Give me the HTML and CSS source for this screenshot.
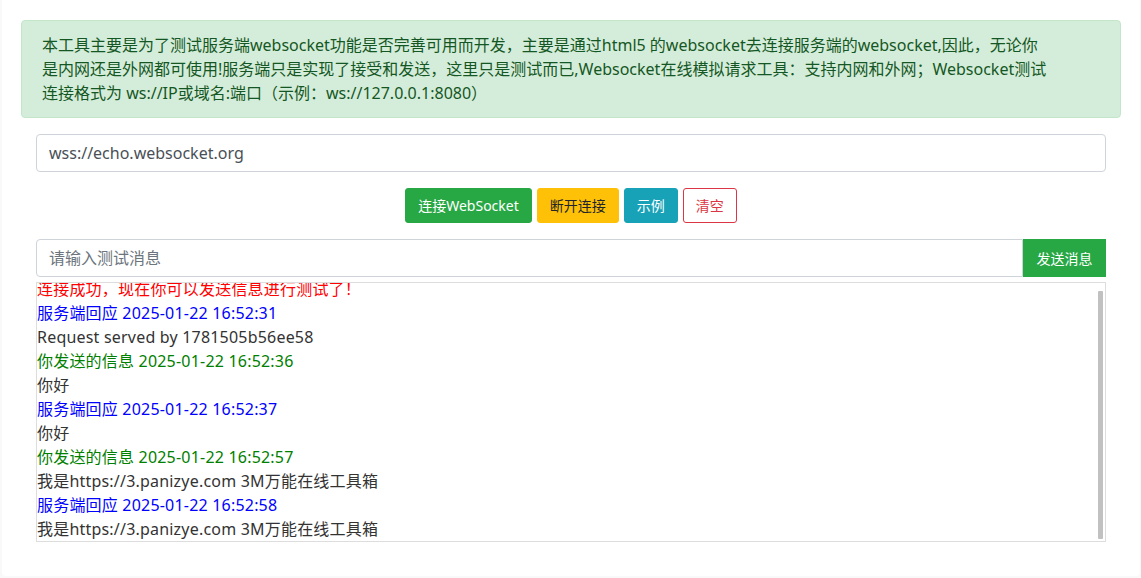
FILE: index.html
```html
<!DOCTYPE html>
<html lang="zh-CN">
<head>
    <meta charset="UTF-8">
    <meta name="viewport" content="width=device-width, initial-scale=1.0">
    <title>WebSocket在线测试</title>
    <link rel="stylesheet" href="styles.css">
</head>
<body>
    <div class="page">
        <div class="container">
            <div class="alert">
                本工具主要是为了测试服务端websocket功能是否完善可用而开发，主要是通过html5 的websocket去连接服务端的websocket,因此，无论你是内网还是外网都可使用!服务端只是实现了接受和发送，这里只是测试而已,Websocket在线模拟请求工具：支持内网和外网；Websocket测试连接格式为 ws://IP或域名:端口（示例：ws://127.0.0.1:8080）
            </div>

            <div class="tool">
                <input type="text" id="url" class="form-control" value="wss://echo.websocket.org">

                <div class="btn-row">
                    <button class="btn btn-success">连接WebSocket</button>
                    <button class="btn btn-warning">断开连接</button>
                    <button class="btn btn-info">示例</button>
                    <button class="btn btn-outline-danger">清空</button>
                </div>

                <div class="input-group">
                    <input type="text" id="message" class="form-control" placeholder="请输入测试消息">
                    <button class="btn btn-success btn-send">发送消息</button>
                </div>

                <div class="log-wrap">
                    <div class="log" id="log">
                        <div class="msg-ok">连接成功，现在你可以发送信息进行测试了！</div>
                        <div class="msg-server">服务端回应 2025-01-22 16:52:31</div>
                        <div>Request served by 1781505b56ee58</div>
                        <div class="msg-client">你发送的信息 2025-01-22 16:52:36</div>
                        <div>你好</div>
                        <div class="msg-server">服务端回应 2025-01-22 16:52:37</div>
                        <div>你好</div>
                        <div class="msg-client">你发送的信息 2025-01-22 16:52:57</div>
                        <div>我是https://3.panizye.com 3M万能在线工具箱</div>
                        <div class="msg-server">服务端回应 2025-01-22 16:52:58</div>
                        <div>我是https://3.panizye.com 3M万能在线工具箱</div>
                    </div>
                    <div class="scroll-thumb"></div>
                </div>
            </div>
        </div>
    </div>

    <script>
        // keep the log scrolled to the newest message
        var log = document.getElementById('log');
        log.scrollTop = log.scrollHeight;
    </script>
</body>
</html>
```

FILE: styles.css
```css
body {
    margin: 0;
    background-color: #f9f9f9;
    font-family: "Noto Sans", "Noto Sans CJK SC", sans-serif;
    font-size: 16px;
    line-height: 1.5;
    color: #333;
}
.page {
    background-color: #fff;
    margin: 0 1px 0 2px;
    min-height: 576px;
    border-radius: 0 0 4px 4px;
}
.container {
    max-width: 1100px;
    margin: 0 auto;
    padding-top: 20px;
}
.alert {
    background-color: #d4edda;
    border: 1px solid #c3e6cb;
    color: #155724;
    border-radius: 4px;
    padding: 12px 68px 12px 20px;
}
.tool {
    padding: 16px 15px 0;
}
.form-control {
    display: block;
    width: 100%;
    height: 38px;
    padding: 6px 12px;
    font-family: inherit;
    font-size: 16px;
    color: #495057;
    border: 1px solid #ced4da;
    border-radius: 4px;
    box-sizing: border-box;
}
.form-control::placeholder {
    color: #6c757d;
}
.btn-row {
    display: flex;
    justify-content: center;
    gap: 5px;
    margin: 16px 0;
}
.btn {
    font-family: inherit;
    font-size: 14px;
    line-height: 21px;
    padding: 6px 12px;
    border: 1px solid transparent;
    border-radius: 3px;
    cursor: pointer;
}
.btn-success {
    background-color: #28a745;
    border-color: #28a745;
    color: #fff;
}
.btn-warning {
    background-color: #ffc107;
    border-color: #ffc107;
    color: #212529;
}
.btn-info {
    background-color: #17a2b8;
    border-color: #17a2b8;
    color: #fff;
}
.btn-outline-danger {
    background-color: #fff;
    border-color: #dc3545;
    color: #dc3545;
}
.input-group {
    display: flex;
}
.input-group .form-control {
    flex: 1;
    border-radius: 4px 0 0 4px;
}
.btn-send {
    border-radius: 0;
    height: 38px;
    width: 83px;
    padding: 0;
}
.log-wrap {
    position: relative;
    margin-top: 5px;
}
.log {
    height: 258px;
    border: 1px solid #ddd;
    overflow-y: scroll;
    scrollbar-width: none;
    line-height: 24px;
    letter-spacing: 0.2px;
}
.log::-webkit-scrollbar {
    display: none;
}
/* the browser hides real scrollbars in the screenshot, so draw the thumb */
.scroll-thumb {
    position: absolute;
    top: 9px;
    bottom: 3px;
    right: 3px;
    width: 5px;
    background-color: #c1c1c1;
    border-radius: 1px;
}
.msg-ok {
    color: #f00;
}
.msg-server {
    color: #00f;
}
.msg-client {
    color: #008000;
}
```
